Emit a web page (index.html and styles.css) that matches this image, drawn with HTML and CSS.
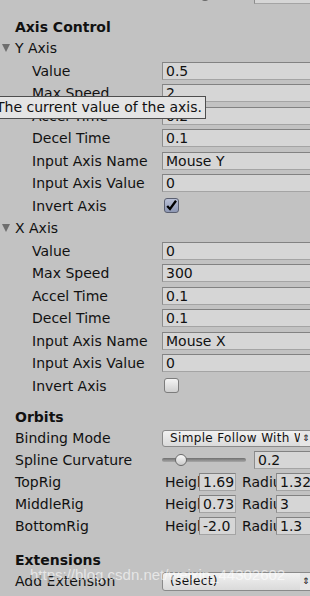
FILE: index.html
```html
<!DOCTYPE html>
<html>
<head>
    <title>Axis Control</title>
    <link rel="stylesheet" href="styles.css">
</head>
<body>
<div class="inspector">
    <!-- tail of the row above, scrolled off the top -->
    <div class="stub">
        <div class="row plain">
            <div class="label"></div>
            <div class="slider"><div class="track"></div><div class="knob knob-top"></div></div>
            <div class="field small-gap"></div>
        </div>
    </div>

    <div class="head">Axis Control</div>

    <div class="row group"><span class="fold"></span>Y Axis</div>
    <div class="row"><div class="label">Value</div><div class="field">0.5</div></div>
    <div class="row"><div class="label">Max Speed</div><div class="field">2</div></div>
    <div class="row"><div class="label">Accel Time</div><div class="field">0.2</div></div>
    <div class="row"><div class="label">Decel Time</div><div class="field">0.1</div></div>
    <div class="row"><div class="label">Input Axis Name</div><div class="field">Mouse Y</div></div>
    <div class="row"><div class="label">Input Axis Value</div><div class="field">0</div></div>
    <div class="row"><div class="label">Invert Axis</div>
        <span class="check on"><svg width="13" height="13" viewBox="0 0 13 13"><path d="M2.2 7 L5 10 L11 1.8" fill="none" stroke="#000" stroke-width="2.3"/></svg></span>
    </div>

    <div class="row group"><span class="fold"></span>X Axis</div>
    <div class="row"><div class="label">Value</div><div class="field">0</div></div>
    <div class="row"><div class="label">Max Speed</div><div class="field">300</div></div>
    <div class="row"><div class="label">Accel Time</div><div class="field">0.1</div></div>
    <div class="row"><div class="label">Decel Time</div><div class="field">0.1</div></div>
    <div class="row"><div class="label">Input Axis Name</div><div class="field">Mouse X</div></div>
    <div class="row"><div class="label">Input Axis Value</div><div class="field">0</div></div>
    <div class="row"><div class="label">Invert Axis</div><span class="check"></span></div>

    <div class="head section">Orbits</div>
    <div class="row plain"><div class="label">Binding Mode</div>
        <div class="popup">Simple Follow With World Up<span class="arrows">&#8661;</span></div>
    </div>
    <div class="row plain"><div class="label">Spline Curvature</div>
        <div class="slider"><div class="track"></div><div class="knob"></div></div>
        <div class="field small-gap">0.2</div>
    </div>
    <div class="row plain"><div class="label">TopRig</div>
        <div class="mini">Height</div><div class="field mini-field">1.69</div>
        <div class="mini">Radius</div><div class="field">1.32</div>
    </div>
    <div class="row plain"><div class="label">MiddleRig</div>
        <div class="mini">Height</div><div class="field mini-field">0.73</div>
        <div class="mini">Radius</div><div class="field">3</div>
    </div>
    <div class="row plain"><div class="label">BottomRig</div>
        <div class="mini">Height</div><div class="field mini-field">-2.0</div>
        <div class="mini">Radius</div><div class="field">1.3</div>
    </div>

    <div class="head section ext">Extensions</div>
    <div class="row plain"><div class="label">Add Extension</div>
        <div class="popup wide">(select)<span class="arrows">&#8661;</span></div>
    </div>

    <div class="tooltip">The current value of the axis.</div>
    <div class="watermark">https://blog.csdn.net/weixin_44302602</div>
</div>
</body>
</html>
```

FILE: styles.css
```css
body {
    margin: 0;
    background-color: #c2c2c2;
    overflow: hidden;
}
.inspector {
    position: relative;
    width: 310px;
    height: 596px;
    overflow: hidden;
    font-family: "DejaVu Sans", sans-serif;
    font-size: 14px;
    color: #111;
}
.stub {
    height: 17px;
    overflow: hidden;
}
.stub .row {
    margin-top: -16px;
}
.head {
    height: 20px;
    line-height: 20px;
    padding-left: 15px;
    font-weight: bold;
}
.head.section {
    margin-top: 10px;
}
.head.ext {
    margin-top: 13px;
}
.row {
    display: flex;
    align-items: center;
    height: 22.5px;
    white-space: nowrap;
}
.row.plain {
    height: 22px;
}
.label {
    width: 162px;
    flex: none;
    box-sizing: border-box;
    padding-left: 32px;
    overflow: hidden;
}
.plain .label {
    padding-left: 15px;
}
.group {
    padding-left: 2px;
}
.fold {
    width: 0;
    height: 0;
    margin-right: 5px;
    border-left: 4px solid transparent;
    border-right: 4px solid transparent;
    border-top: 8px solid #6e6e6e;
}
.field {
    flex: 1;
    height: 18px;
    line-height: 17px;
    box-sizing: border-box;
    padding-left: 3px;
    margin-right: -12px;
    background-color: #d6d6d6;
    border: 1px solid #a4a4a4;
    border-top-color: #828282;
    border-left-color: #8c8c8c;
    overflow: hidden;
}
.field.small-gap {
    margin-left: 8px;
}
.check {
    width: 15px;
    height: 15px;
    margin-left: 2px;
    box-sizing: border-box;
    border: 1px solid #7c7c7c;
    border-radius: 3px;
    background: linear-gradient(#f4f4f4, #cfcfcf);
}
.check.on {
    background: linear-gradient(#b9c0d6, #8e98b4);
    border-color: #5a5f70;
}
.check svg {
    display: block;
}
.popup {
    flex: 1;
    position: relative;
    height: 17px;
    line-height: 15px;
    box-sizing: border-box;
    padding-left: 7px;
    padding-right: 12px;
    font-size: 12px;
    letter-spacing: 0.35px;
    border: 1px solid #8a8a8a;
    border-radius: 3px;
    margin-right: -3px;
    background: linear-gradient(#f2f2f2, #dadada);
    overflow: hidden;
}
.popup.wide {
    height: 19px;
    line-height: 17px;
}
.arrows {
    position: absolute;
    right: 2px;
    top: 0;
    padding-left: 2px;
    font-size: 9px;
    background-color: #e6e6e6;
}
.slider {
    position: relative;
    width: 84px;
    height: 14px;
    flex: none;
}
.track {
    position: absolute;
    left: 0;
    right: 0;
    top: 5px;
    height: 4px;
    border-radius: 2px;
    background: linear-gradient(#6f6f6f, #a8a8a8);
}
.knob {
    position: absolute;
    left: 13px;
    top: 1px;
    width: 12px;
    height: 12px;
    box-sizing: border-box;
    border: 1px solid #6a6a6a;
    border-radius: 50%;
    background: linear-gradient(#fafafa, #cacaca);
}
.knob.knob-top {
    left: 37px;
    background: #444;
}
.mini {
    width: 34px;
    flex: none;
    padding-left: 3px;
    overflow: hidden;
}
.field.mini-field {
    flex: none;
    width: 37px;
    margin-right: 3px;
}
.tooltip {
    position: absolute;
    left: -7px;
    top: 96px;
    height: 23px;
    line-height: 21px;
    box-sizing: border-box;
    padding: 0 3px 0 2px;
    background-color: #e4e4e4;
    border: 1px solid #4e4e4e;
    white-space: nowrap;
}
.watermark {
    position: absolute;
    left: 30px;
    top: 566px;
    font-family: "Liberation Sans", sans-serif;
    font-size: 15px;
    color: rgba(255, 255, 255, 0.6);
    white-space: nowrap;
}
```
